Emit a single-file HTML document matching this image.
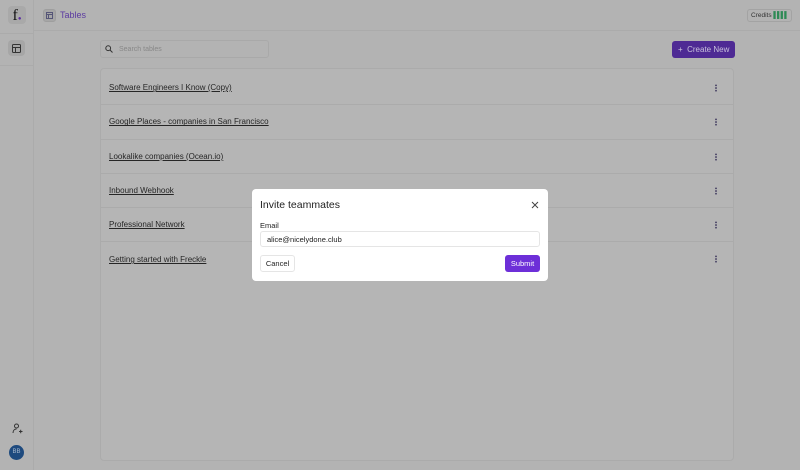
<!DOCTYPE html>
<html><head><style>
*{box-sizing:border-box;margin:0;padding:0}
body{width:800px;height:470px;background:#b3b3b3;font-family:"Liberation Sans",sans-serif;position:relative;overflow:hidden;color:#1a1a1a}
.side{position:absolute;left:0;top:0;width:34px;height:470px;border-right:1px solid #ababab}
.top{position:absolute;left:34px;top:0;right:0;height:31px;border-bottom:1px solid #ababab}
.card{position:absolute;left:100px;top:68px;width:634px;height:393px;border:1px solid #ababab;border-radius:4px;background:#b5b5b5;padding-top:2px}
.row{height:34.3px;border-bottom:1px solid #ababab;display:flex;align-items:center;padding-left:8px;font-size:8px;text-decoration:underline;color:#262626;position:relative}
.dots{position:absolute;right:16px;top:13px;width:2px;height:8px;background:radial-gradient(circle,#4a4466 0.8px,transparent 1px) 0 0/2px 2.7px}
.modal{position:absolute;left:252px;top:189px;width:296px;height:92px;background:#fff;border-radius:4px}
</style></head><body>
<div class="side">
 <div style="position:absolute;left:8px;top:6px;width:18px;height:18px;border-radius:4px;background:#a9a9a9;font-family:'Liberation Serif',serif;font-size:16px;text-align:center;line-height:19px;color:#111">f<span style="color:#5b2ea0;font-size:6px">●</span></div>
 <div style="position:absolute;left:0;top:33px;width:34px;border-top:1px solid #ababab;height:33px;border-bottom:1px solid #ababab"></div>
 <div style="position:absolute;left:8px;top:40px;width:17px;height:16px;border-radius:4px;background:#a6a6a6"></div>
 <svg style="position:absolute;left:12px;top:44px" width="9" height="9" viewBox="0 0 9 9"><rect x=".5" y=".5" width="8" height="8" rx="1" fill="none" stroke="#333"/><path d="M.5 3.5h8M3.5 3.5v5" stroke="#333"/></svg>
 <svg style="position:absolute;left:12px;top:423px" width="11" height="11" viewBox="0 0 11 11"><circle cx="4.5" cy="3" r="2" fill="none" stroke="#333"/><path d="M1 10c0-2.5 1.5-4 3.5-4M7 8.5h3.5M8.7 6.8v3.4" stroke="#333" fill="none"/></svg>
 <div style="position:absolute;left:9px;top:445px;width:15px;height:15px;border-radius:50%;background:#1e4a7e;color:#a9b9cc;font-size:6px;text-align:center;line-height:15px">BB</div>
</div>
<div class="top">
 <div style="position:absolute;left:9px;top:9px;width:13px;height:13px;border-radius:3px;background:#a6a6a6;border:1px solid #9e9e9e"></div>
 <svg style="position:absolute;left:12px;top:12px" width="7" height="7" viewBox="0 0 7 7"><rect x=".5" y=".5" width="6" height="6" fill="none" stroke="#557"/><path d="M.5 2.5h6M2.5 2.5v4" stroke="#557"/></svg>
 <div style="position:absolute;left:26px;top:10px;font-size:9px;color:#5b3aa0">Tables</div>
 <div style="position:absolute;right:8px;top:9px;width:45px;height:13px;border:1px solid #a3a3a3;border-radius:3px;font-size:6.5px;color:#333;padding:2px 3px;white-space:nowrap;line-height:8px">Credits <span style="color:#2e8a55;letter-spacing:-1px">▌▌▌▌</span></div>
</div>
<div style="position:absolute;left:100px;top:40px;width:169px;height:18px;border:1px solid #a9a9a9;border-radius:3px;font-size:7px;color:#888;padding:5px 0 0 18px">Search tables</div>
<svg style="position:absolute;left:105px;top:45px" width="8" height="8" viewBox="0 0 8 8"><circle cx="3.2" cy="3.2" r="2.4" fill="none" stroke="#333"/><path d="M5 5l2.5 2.5" stroke="#333"/></svg>
<div style="position:absolute;left:672px;top:41px;width:63px;height:17px;background:#4e2a94;border-radius:3px;color:#c9c2dc;font-size:8px;line-height:17px;padding-left:6px">+&nbsp;&nbsp;Create New</div>
<div class="card">
 <div class="row">Software Engineers I Know (Copy)<div class="dots"></div></div>
 <div class="row">Google Places - companies in San Francisco<div class="dots"></div></div>
 <div class="row">Lookalike companies (Ocean.io)<div class="dots"></div></div>
 <div class="row">Inbound Webhook<div class="dots"></div></div>
 <div class="row">Professional Network<div class="dots"></div></div>
 <div class="row" style="border:none">Getting started with Freckle<div class="dots"></div></div>
</div>
<div class="modal">
 <div style="position:absolute;left:8px;top:10px;font-size:10.5px;color:#222">Invite teammates</div>
 <svg style="position:absolute;left:279px;top:12px" width="8" height="8" viewBox="0 0 8 8"><path d="M1 1l6 6M7 1l-6 6" stroke="#444" stroke-width="1"/></svg>
 <div style="position:absolute;left:8px;top:32px;font-size:7.5px;color:#222">Email</div>
 <div style="position:absolute;left:8px;top:42px;width:280px;height:16px;border:1px solid #e5e5e5;border-radius:3px;font-size:7.5px;padding:3px 0 0 6px;color:#222">alice@nicelydone.club</div>
 <div style="position:absolute;left:8px;top:66px;width:35px;height:17px;border:1px solid #e5e5e5;border-radius:3px;font-size:7.5px;line-height:15px;text-align:center;color:#222">Cancel</div>
 <div style="position:absolute;left:253px;top:66px;width:35px;height:17px;background:#6d2fd8;border-radius:3px;font-size:7.5px;line-height:17px;text-align:center;color:#fff">Submit</div>
</div>
</body></html>
